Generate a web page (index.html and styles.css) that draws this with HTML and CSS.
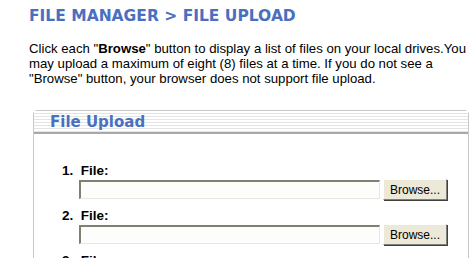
FILE: index.html
```html
<!DOCTYPE html>
<html lang="en">
<head>
  <meta charset="UTF-8">
  <title>File Manager - File Upload</title>
  <link rel="stylesheet" href="styles.css">
</head>
<body>
  <div class="page">
    <h1>FILE MANAGER &gt; FILE UPLOAD</h1>

    <p class="intro">Click each "<b>Browse</b>" button to display a list of files on your local drives.You may upload a maximum of eight (8) files at a time. If you do not see a "Browse" button, your browser does not support file upload.</p>

    <!-- Upload panel -->
    <div class="panel">
      <div class="panel-head">File Upload</div>
      <div class="panel-body">
        <div class="file-row">
          <label>1.&nbsp; File:</label>
          <div class="file-field">
            <div class="file-input"></div>
            <button class="browse">Browse...</button>
          </div>
        </div>
        <div class="file-row">
          <label>2.&nbsp; File:</label>
          <div class="file-field">
            <div class="file-input"></div>
            <button class="browse">Browse...</button>
          </div>
        </div>
        <div class="file-row">
          <label>3.&nbsp; File:</label>
          <div class="file-field">
            <div class="file-input"></div>
            <button class="browse">Browse...</button>
          </div>
        </div>
      </div>
    </div>
  </div>
</body>
</html>
```

FILE: styles.css
```css
body {
  margin: 0;
  background-color: #fff;
  font-family: 'Liberation Sans', Arial, sans-serif;
  color: #000;
  overflow: hidden;
  height: 258px;
}

.page {
  padding: 7px 0 0 29px;
}

h1 {
  margin: 0;
  font-family: 'DejaVu Sans', Verdana, sans-serif;
  font-size: 15.5px;
  font-weight: bold;
  color: #4a6fc0; /* Blue heading */
  line-height: 19px;
}

.intro {
  margin: 15px 0 0 0;
  font-size: 13.2px;
  line-height: 15px;
  width: 442px;
}

/* Panel */
.panel {
  margin: 24px 3px 0 4px;
  border: 1px solid #c8c8c8;
  border-radius: 4px 4px 0 0;
}

.panel-head {
  height: 21px;
  padding-left: 16px;
  font-family: 'DejaVu Sans', Verdana, sans-serif;
  font-size: 15px;
  font-weight: bold;
  line-height: 22px;
  color: #4a6fc0;
  background: repeating-linear-gradient(#fff 0, #fff 2px, #e4e4e4 2px, #e4e4e4 3px);
  border-bottom: 2px solid #a8a8a8;
}

.panel-body {
  padding: 29px 0 0 28px;
}

.file-row {
  margin-bottom: 8px;
}

.file-row label {
  display: block;
  font-size: 13.5px;
  font-weight: bold;
  line-height: 16px;
}

.file-field {
  display: flex;
  align-items: center;
  margin-left: 17px;
}

.file-input {
  width: 298px;
  height: 16px;
  border-top: 2px solid #808070;
  border-left: 2px solid #808070;
  border-right: 1px solid #e8e8e0;
  border-bottom: 1px solid #e8e8e0;
  background-color: #fdfdfb;
}

.browse {
  margin-left: 3px;
  width: 64px;
  height: 21px;
  padding: 0;
  font-family: 'Liberation Sans', Arial, sans-serif;
  font-size: 12px;
  color: #000;
  background-color: #ece9d8;
  border: 1px solid;
  border-color: #fff #808080 #808080 #fff;
  box-shadow: 1px 1px 0 #404040;
}
```
